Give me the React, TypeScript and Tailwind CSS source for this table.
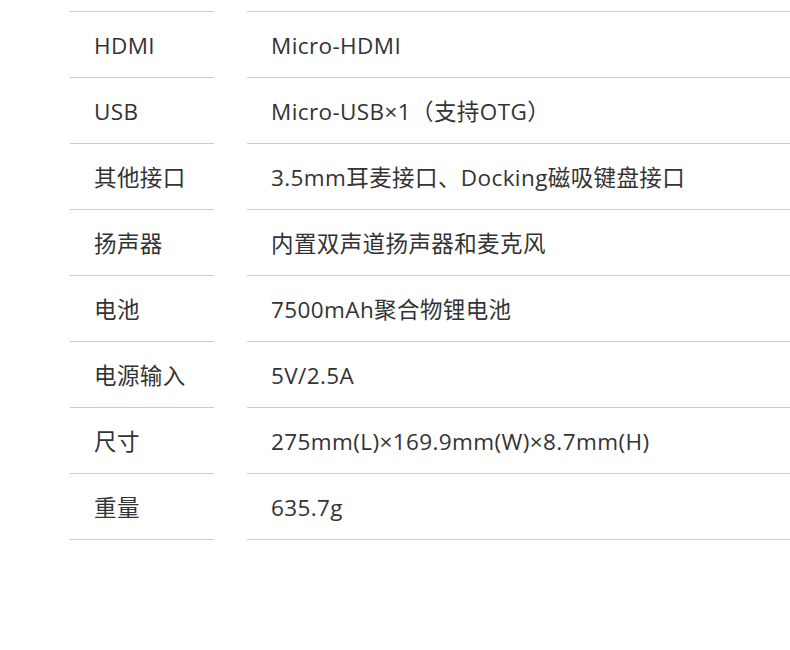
import React from "react";

const rows: [string, string][] = [
  ["HDMI", "Micro-HDMI"],
  ["USB", "Micro-USB×1（支持OTG）"],
  ["其他接口", "3.5mm耳麦接口、Docking磁吸键盘接口"],
  ["扬声器", "内置双声道扬声器和麦克风"],
  ["电池", "7500mAh聚合物锂电池"],
  ["电源输入", "5V/2.5A"],
  ["尺寸", "275mm(L)×169.9mm(W)×8.7mm(H)"],
  ["重量", "635.7g"],
];

export default function App() {
  return (
    <div
      className="w-[790px] h-[650px] bg-white overflow-hidden pt-[11px] pl-[70px]"
      style={{ fontFamily: '"Open Sans", "Noto Sans CJK SC", sans-serif' }}
    >
      <div className="flex flex-col">
        {rows.map(([k, v], i) => (
          <div key={i} className="flex gap-x-[33px]">
            <div
              className={`w-[144px] h-[66px] border-b border-[#cccccc] flex items-center pl-[24px] pt-[2px] text-[22.5px] tracking-[0.4px] text-[#333333] whitespace-nowrap ${
                i === 0 ? "border-t h-[67px]" : ""
              }`}
            >
              {k}
            </div>
            <div
              className={`w-[543px] h-[66px] border-b border-[#cccccc] flex items-center pl-[24px] pt-[2px] text-[22.5px] tracking-[0.4px] text-[#333333] whitespace-nowrap ${
                i === 0 ? "border-t h-[67px]" : ""
              }`}
            >
              {v}
            </div>
          </div>
        ))}
      </div>
    </div>
  );
}
